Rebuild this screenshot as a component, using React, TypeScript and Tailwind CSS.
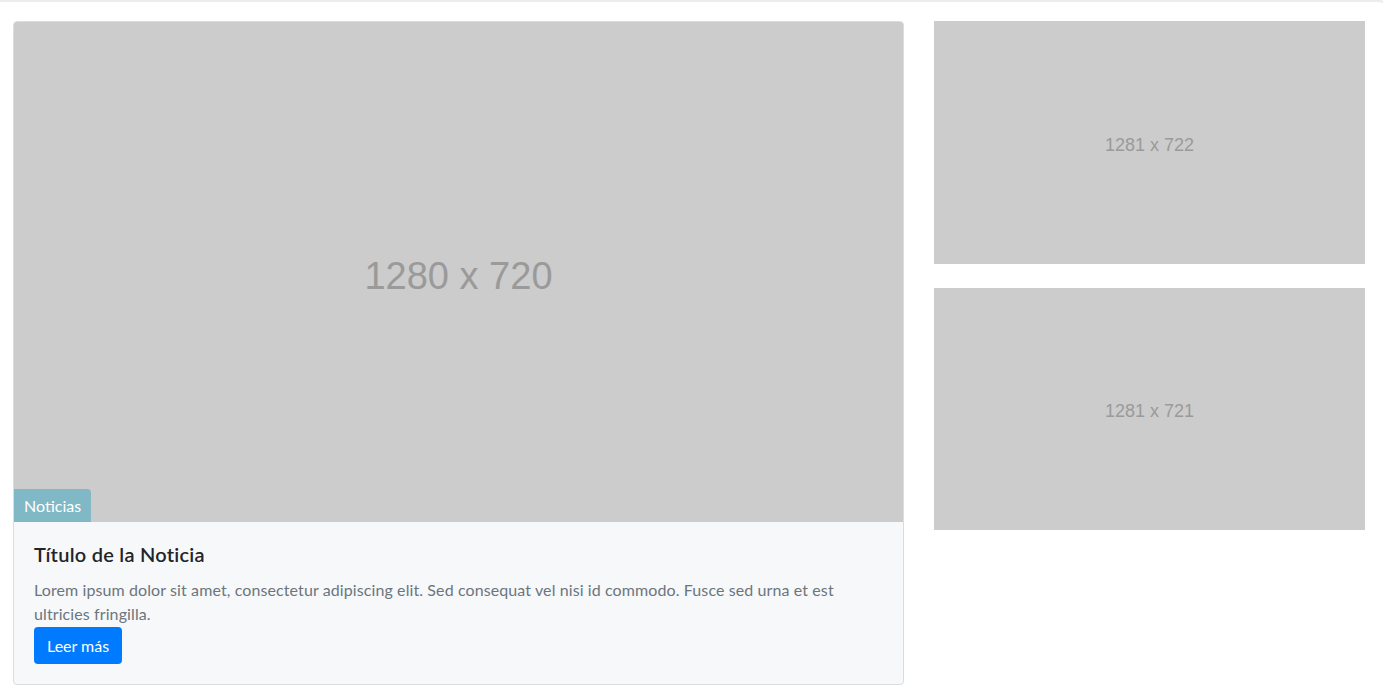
import React from 'react'

function Placeholder({ label, className }: { label: string; className: string }) {
  return (
    <div className={`flex items-center justify-center bg-[#cccccc] text-[#9a9a9a] font-['Liberation_Sans',Arial,sans-serif] ${className}`}>
      {label}
    </div>
  )
}

export default function App() {
  return (
    <div className="w-full overflow-hidden bg-white font-['Lato','Open_Sans',sans-serif]">
      <div className="w-[1387px] h-[689px] border-t-2 border-r-2 border-[#ececec] rounded-tr-lg">
        <div className="flex gap-[30px] pl-[13px] pt-[19px]">
          <div className="w-[891px] border border-[#dcdcdc] rounded-[4px] overflow-hidden bg-[#f7f8fa]">
            <div className="relative">
              <Placeholder label="1280 x 720" className="h-[500px] text-[38px] pt-[8px]" />
              <span className="absolute left-0 bottom-0 h-[33px] px-[10px] flex items-center bg-[#80b8c6] text-white text-[16px] rounded-tr-[4px]">
                Noticias
              </span>
            </div>
            <div className="px-5 pt-5 pb-5">
              <h5 className="text-[20px] leading-6 font-semibold tracking-[0.25px] text-[#212529] mb-3">Título de la Noticia</h5>
              <p className="text-[16px] leading-6 tracking-[0.1px] text-[#6c757d] pr-10">
                Lorem ipsum dolor sit amet, consectetur adipiscing elit. Sed consequat vel nisi id commodo. Fusce sed urna et est ultricies fringilla.
              </p>
              <button className="mt-[1px] h-[37px] px-[13px] rounded-[4px] bg-[#007bff] text-white text-[16px]">
                Leer más
              </button>
            </div>
          </div>
          <div className="w-[431px] flex flex-col gap-6">
            <Placeholder label="1281 x 722" className="h-[243px] text-[18px] pt-[6px]" />
            <Placeholder label="1281 x 721" className="h-[242px] text-[18px] pt-[4px]" />
          </div>
        </div>
      </div>
    </div>
  )
}
